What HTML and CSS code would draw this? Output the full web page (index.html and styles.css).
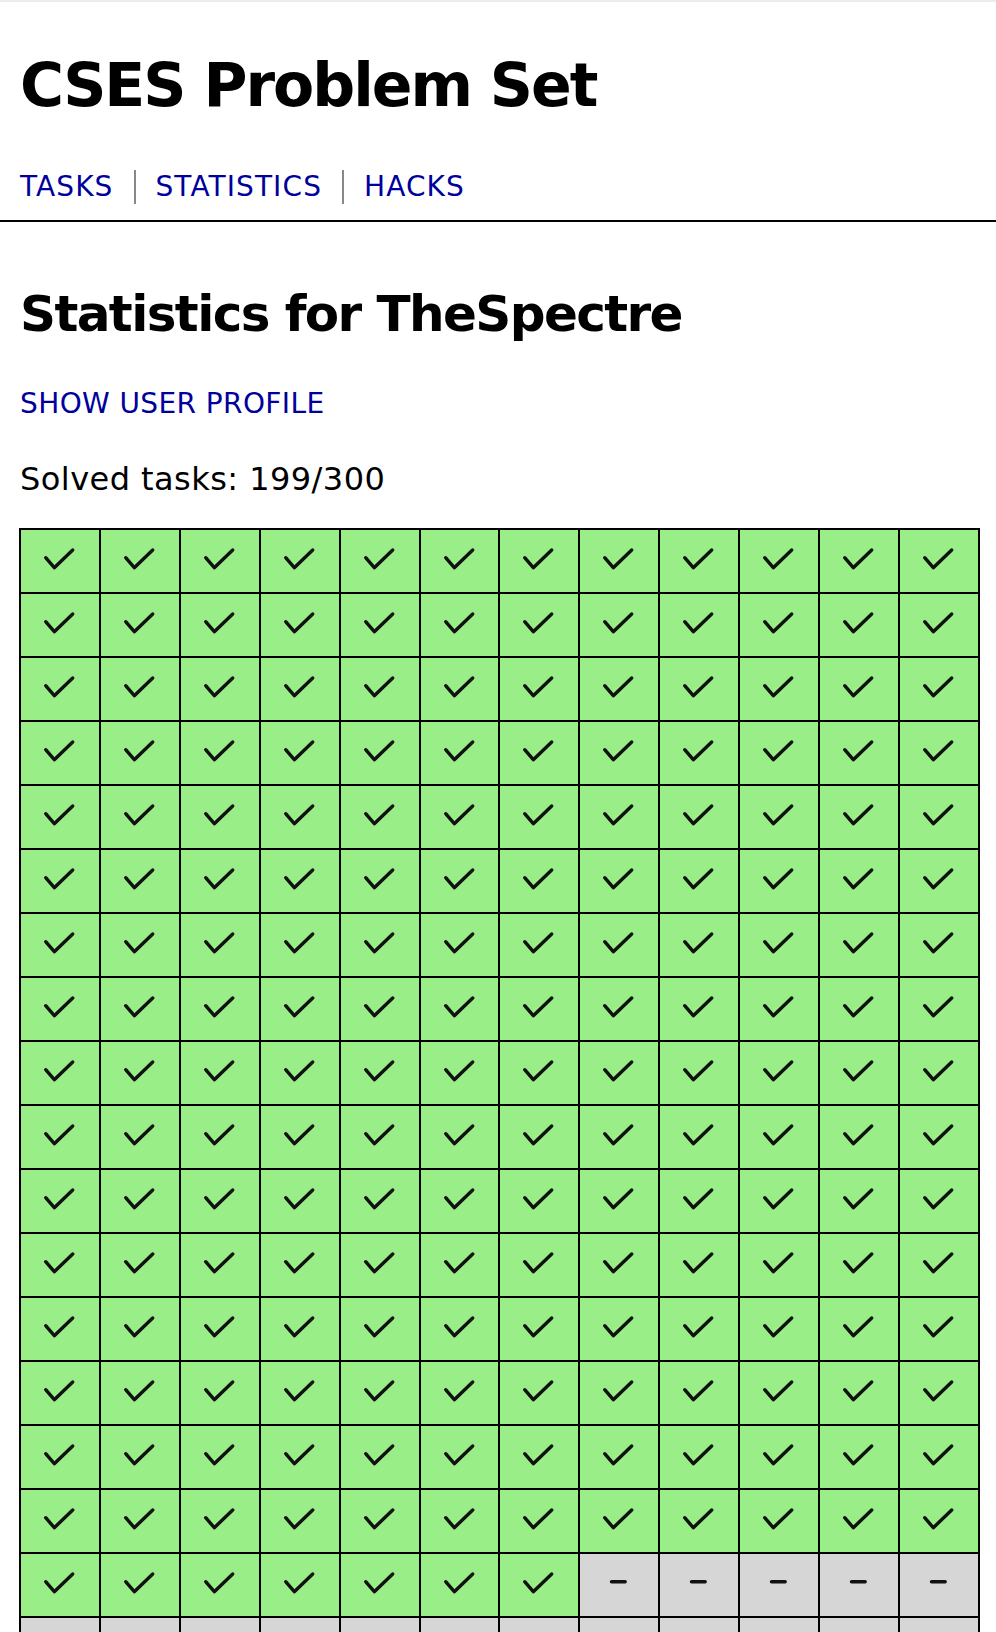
FILE: index.html
```html
<!DOCTYPE html>
<html lang="en">
<head>
    <meta charset="UTF-8">
    <title>CSES - Statistics for TheSpectre</title>
    <link rel="stylesheet" href="styles.css">
</head>
<body>

    <div class="header">
        <h1>CSES Problem Set</h1>
        <div class="nav">
            <a href="#">TASKS</a>
            <a href="#">STATISTICS</a>
            <a href="#">HACKS</a>
        </div>
    </div>

    <div class="content">
        <h2>Statistics for TheSpectre</h2>
        <a class="profile" href="#">SHOW USER PROFILE</a>
        <p class="solved">Solved tasks: 199/300</p>
        <table id="taskTable">
            <tbody></tbody>
        </table>
    </div>

<script>
    const total = 300;
    const solved = 199;
    const perRow = 12;

    const check = '<svg viewBox="0 0 78 62" width="78" height="62"><polyline points="24.7,27.7 33.3,37.7 51.7,20" /></svg>';
    const dash = '<svg viewBox="0 0 78 62" width="78" height="62"><line x1="31.5" y1="27.8" x2="45.2" y2="27.8" /></svg>';

    const tbody = document.querySelector("#taskTable tbody");
    let html = "";
    for (let i = 0; i < total; i++) {
        if (i % perRow == 0) html += "<tr>";
        if (i < solved) {
            html += '<td class="full">' + check + '</td>';
        } else {
            html += '<td class="none">' + dash + '</td>';
        }
        if (i % perRow == perRow - 1) html += "</tr>";
    }
    tbody.innerHTML = html;
</script>

</body>
</html>
```

FILE: styles.css
```css
body {
    font-family: "DejaVu Sans", Verdana, sans-serif;
    margin: 0;
    border-top: 2px solid #ececec;
    color: #000;
}

a {
    color: #00009c;
    text-decoration: none;
}

.header {
    padding: 47px 20px 16px;
    border-bottom: 2px solid #000;
}

h1 {
    margin: 0;
    font-size: 60px;
    line-height: 72px;
    letter-spacing: -2px;
}

.nav {
    display: flex;
    margin-top: 49px;
    font-size: 28px;
    line-height: 34px;
    letter-spacing: 1.1px;
}

.nav a {
    padding: 0 20px 0 20px;
    border-left: 2px solid #888;
}

.nav a:first-child {
    padding-left: 0;
    border-left: none;
}

.content {
    padding: 0 20px 40px;
}

h2 {
    margin: 62px 0 0;
    font-size: 50px;
    line-height: 60px;
    letter-spacing: -1.6px;
}

.profile {
    display: block;
    margin-top: 43px;
    font-size: 28px;
    line-height: 34px;
    letter-spacing: 0.4px;
}

.solved {
    margin: 39px 0 0;
    font-size: 32px;
    line-height: 38px;
    letter-spacing: 0.45px;
}

table {
    width: 961px;
    margin: 30px 0 0 -1px;
    table-layout: fixed;
    border-collapse: separate;
    border-spacing: 0;
    border-top: 2px solid #000;
    border-left: 2px solid #000;
}

td {
    box-sizing: border-box;
    height: 64px;
    padding: 0;
    border-right: 2px solid #000;
    border-bottom: 2px solid #000;
    line-height: 0;
}

td svg {
    display: block;
    fill: none;
    stroke: #111;
    stroke-width: 3.4;
    stroke-linecap: round;
    stroke-linejoin: round;
}

td.full {
    background-color: #99ee88;
}

td.none {
    background-color: #d6d6d6;
}
```
